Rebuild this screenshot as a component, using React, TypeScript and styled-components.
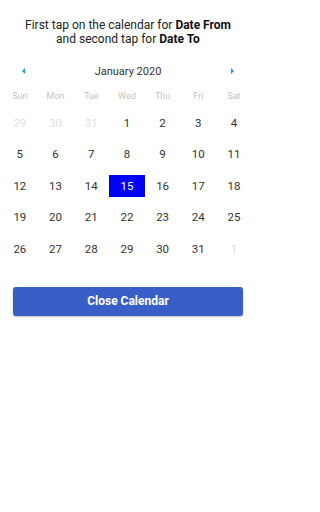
import React from "react";
import styled, { createGlobalStyle } from "styled-components";

const Global = createGlobalStyle`
  html, body { margin: 0; padding: 0; background: #fff; }
  body { font-family: Roboto, "Noto Sans", Arial, sans-serif; }
`;

const Page = styled.div`
  width: 256px;
  height: 512px;
  background: #fff;
  display: flex;
  flex-direction: column;
  padding-top: 18px;
  box-sizing: border-box;
`;

const Title = styled.div`
  font-size: 12px;
  line-height: 14px;
  color: #222;
  text-align: center;
  b { font-weight: 700; color: #111; }
`;

const Header = styled.div`
  display: flex;
  align-items: center;
  justify-content: space-between;
  height: 20px;
  margin-top: 15px;
  padding: 0 22px;
`;

const Arrow = styled.div<{ $dir: "left" | "right" }>`
  width: 0;
  height: 0;
  border-top: 3px solid transparent;
  border-bottom: 3px solid transparent;
  ${(p) =>
    p.$dir === "left"
      ? "border-right: 3.5px solid #2196f3;"
      : "border-left: 3.5px solid #2196f3;"}
`;

const Month = styled.div`
  font-size: 11px;
  color: #333;
`;

const Grid = styled.div`
  display: grid;
  grid-template-columns: repeat(7, 35.7px);
  margin-left: 2px;
`;

const WeekDay = styled.div`
  height: 14px;
  margin-top: 8px;
  margin-bottom: 4px;
  font-size: 9px;
  line-height: 14px;
  color: #c4c4c4;
  text-align: center;
`;

const DayCell = styled.div`
  height: 31.5px;
  display: flex;
  align-items: center;
  justify-content: center;
`;

const DayText = styled.div<{ $muted?: boolean; $selected?: boolean }>`
  width: 36px;
  height: 22px;
  display: flex;
  align-items: center;
  justify-content: center;
  font-size: 11.5px;
  color: ${(p) => (p.$selected ? "#fff" : p.$muted ? "#dedede" : "#333")};
  background: ${(p) => (p.$selected ? "#0000f5" : "transparent")};
`;

const Button = styled.button`
  margin: 22px 13px 0;
  height: 29px;
  border: none;
  border-radius: 3px;
  background: #3a5ec7;
  color: #fff;
  font-family: Roboto, "Noto Sans", Arial, sans-serif;
  font-weight: 700;
  font-size: 12px;
  box-shadow: 0 1px 2px rgba(0, 0, 0, 0.25);
`;

const weekDays = ["Sun", "Mon", "Tue", "Wed", "Thu", "Fri", "Sat"];

type Day = { n: number; muted?: boolean };
const days: Day[] = [
  { n: 29, muted: true },
  { n: 30, muted: true },
  { n: 31, muted: true },
  ...Array.from({ length: 31 }, (_, i) => ({ n: i + 1 })),
  { n: 1, muted: true },
];

export default function App() {
  return (
    <>
      <Global />
      <Page>
        <Title>
          First tap on the calendar for <b>Date From</b>
          <br />
          and second tap for <b>Date To</b>
        </Title>
        <Header>
          <Arrow $dir="left" />
          <Month>January 2020</Month>
          <Arrow $dir="right" />
        </Header>
        <Grid>
          {weekDays.map((w) => (
            <WeekDay key={w}>{w}</WeekDay>
          ))}
          {days.map((d, i) => (
            <DayCell key={i}>
              <DayText $muted={d.muted} $selected={!d.muted && d.n === 15}>
                {d.n}
              </DayText>
            </DayCell>
          ))}
        </Grid>
        <Button>Close Calendar</Button>
      </Page>
    </>
  );
}
